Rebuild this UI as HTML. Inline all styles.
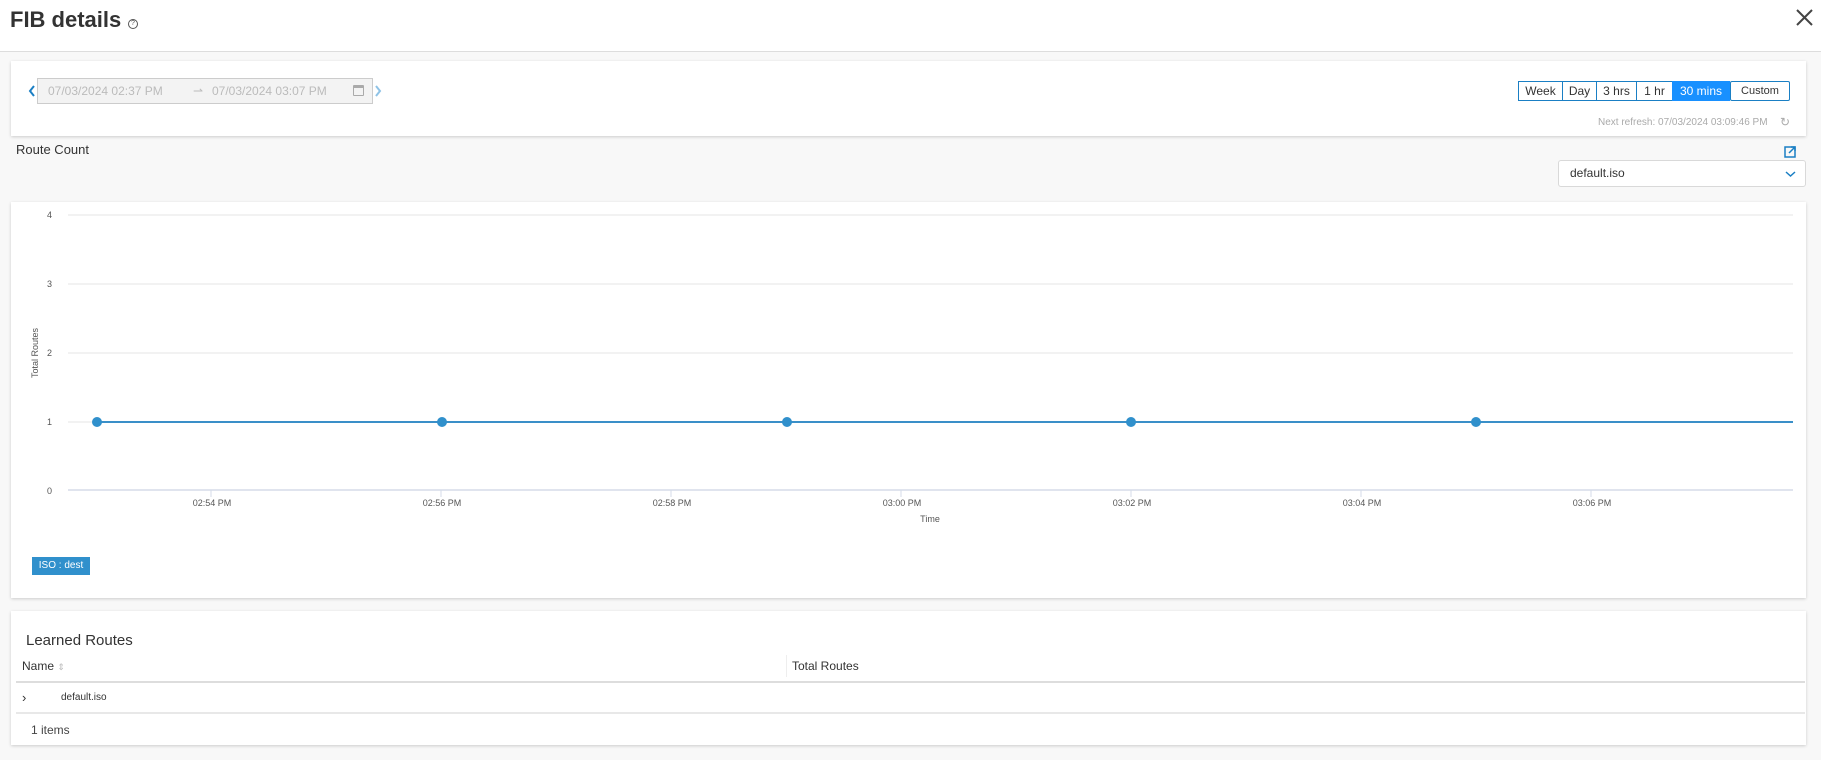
<!DOCTYPE html>
<html><head><meta charset="utf-8"><style>
*{box-sizing:border-box;margin:0;padding:0}
body{width:1821px;height:760px;background:#f8f8f8;font-family:"Liberation Sans",sans-serif;position:relative;overflow:hidden;color:#333}
.a{position:absolute}
.card{position:absolute;background:#fff;box-shadow:0 1px 3px rgba(0,0,0,.18)}
.btn{position:absolute;top:81px;height:20px;border:1px solid #1a7fc4;font-size:12px;line-height:18px;text-align:center;color:#333;background:#fff}
</style></head><body>
<div class="a" style="left:0;top:0;width:1821px;height:52px;background:#fff;border-bottom:1px solid #ddd"></div>
<div class="a" style="left:10px;top:7px;font-size:22px;font-weight:bold;color:#333">FIB details</div>
<div class="a" style="left:128px;top:19px;width:10px;height:10px;border:1px solid #555;border-radius:50%;font-size:7px;line-height:8px;text-align:center;color:#555">?</div>
<svg class="a" style="left:1796px;top:9px" width="17" height="17"><path d="M1 1L16 16M16 1L1 16" stroke="#444" stroke-width="2"/></svg>

<div class="card" style="left:11px;top:61px;width:1795px;height:75px"></div>
<svg class="a" style="left:28px;top:85px" width="8" height="12"><path d="M6 1L2 6L6 11" stroke="#1a7fc4" stroke-width="2" fill="none"/></svg>
<div class="a" style="left:37px;top:78px;width:336px;height:26px;background:#f3f3f3;border:1px solid #ccc;font-size:12px;color:#bbb;line-height:24px">
<span class="a" style="left:10px">07/03/2024 02:37 PM</span><span class="a" style="left:155px">⇀</span><span class="a" style="left:174px">07/03/2024 03:07 PM</span>
<span class="a" style="left:315px;top:6px;width:11px;height:11px;border:1px solid #aaa;border-top-width:3px;border-radius:1px"></span></div>
<svg class="a" style="left:374px;top:85px" width="8" height="12"><path d="M2 1L6 6L2 11" stroke="#8fc3e6" stroke-width="2" fill="none"/></svg>
<div class="btn" style="left:1518px;width:45px">Week</div>
<div class="btn" style="left:1562px;width:35px">Day</div>
<div class="btn" style="left:1596px;width:41px">3 hrs</div>
<div class="btn" style="left:1636px;width:37px">1 hr</div>
<div class="btn" style="left:1672px;width:58px;background:#1890ff;color:#fff;border-color:#1890ff">30 mins</div>
<div class="btn" style="left:1730px;width:60px;font-size:11px;border-radius:2px">Custom</div>
<div class="a" style="left:1598px;top:117px;font-size:10px;color:#aaa">Next refresh: 07/03/2024 03:09:46 PM</div>
<div class="a" style="left:1780px;top:115px;font-size:12px;color:#aaa">↻</div>

<div class="a" style="left:16px;top:142px;font-size:13px;color:#333">Route Count</div>
<svg class="a" style="left:1784px;top:146px" width="12" height="12"><rect x="1" y="1" width="10" height="10" fill="none" stroke="#1a7fc4" stroke-width="1.5"/><path d="M5 7L11 1M7 1H11V5" stroke="#1a7fc4" stroke-width="1.5" fill="none"/></svg>
<div class="a" style="left:1558px;top:160px;width:248px;height:27px;background:#fff;border:1px solid #d9d9d9;border-radius:3px;font-size:12px;line-height:25px;padding-left:11px;color:#333">default.iso
<svg class="a" style="right:9px;top:9px" width="11" height="8"><path d="M1 2L5.5 6L10 2" stroke="#1a7fc4" stroke-width="1.5" fill="none"/></svg></div>

<div class="card" style="left:11px;top:202px;width:1795px;height:396px"></div>
<svg class="a" style="left:0;top:0" width="1821" height="600">
<g stroke="#eee" stroke-width="1.5"><line x1="68" y1="215" x2="1793" y2="215"/><line x1="68" y1="284" x2="1793" y2="284"/><line x1="68" y1="353" x2="1793" y2="353"/><line x1="68" y1="422" x2="1793" y2="422"/></g>
<line x1="68" y1="490" x2="1793" y2="490" stroke="#d5dbe8" stroke-width="1.5"/>
<g stroke="#d5dbe8"><line x1="211" y1="490" x2="211" y2="497"/><line x1="441" y1="490" x2="441" y2="497"/><line x1="671" y1="490" x2="671" y2="497"/><line x1="901" y1="490" x2="901" y2="497"/><line x1="1131" y1="490" x2="1131" y2="497"/><line x1="1361" y1="490" x2="1361" y2="497"/><line x1="1591" y1="490" x2="1591" y2="497"/></g>
<line x1="97" y1="422" x2="1793" y2="422" stroke="#3a8fc8" stroke-width="2"/>
<g fill="#3090cc"><circle cx="97" cy="422" r="5"/><circle cx="442" cy="422" r="5"/><circle cx="787" cy="422" r="5"/><circle cx="1131" cy="422" r="5"/><circle cx="1476" cy="422" r="5"/></g>
<g font-size="9" fill="#555" font-family="Liberation Sans"><text x="47" y="218">4</text><text x="47" y="287">3</text><text x="47" y="356">2</text><text x="47" y="425">1</text><text x="47" y="494">0</text>
<g text-anchor="middle"><text x="212" y="506">02:54 PM</text><text x="442" y="506">02:56 PM</text><text x="672" y="506">02:58 PM</text><text x="902" y="506">03:00 PM</text><text x="1132" y="506">03:02 PM</text><text x="1362" y="506">03:04 PM</text><text x="1592" y="506">03:06 PM</text><text x="930" y="522">Time</text>
<text transform="translate(38,353) rotate(-90)">Total Routes</text></g></g>
</svg>
<div class="a" style="left:32px;top:557px;width:58px;height:18px;background:#3090cc;color:#fff;font-size:10px;line-height:18px;text-align:center">ISO : dest</div>

<div class="card" style="left:11px;top:611px;width:1795px;height:134px"></div>
<div class="a" style="left:26px;top:632px;font-size:15px;color:#333">Learned Routes</div>
<div class="a" style="left:22px;top:659px;font-size:12px;color:#333">Name <span style="color:#bbb;font-size:9px">⇕</span></div>
<div class="a" style="left:786px;top:655px;width:1px;height:22px;background:#eee"></div>
<div class="a" style="left:792px;top:659px;font-size:12px;color:#333">Total Routes</div>
<div class="a" style="left:16px;top:681px;width:1789px;height:2px;background:#ddd"></div>
<div class="a" style="left:22px;top:690px;font-size:13px;color:#333">›</div>
<div class="a" style="left:61px;top:692px;font-size:10px;color:#333">default.iso</div>
<div class="a" style="left:16px;top:712px;width:1789px;height:2px;background:#e8e8e8"></div>
<div class="a" style="left:31px;top:723px;font-size:12px;color:#444">1 items</div>
</body></html>
